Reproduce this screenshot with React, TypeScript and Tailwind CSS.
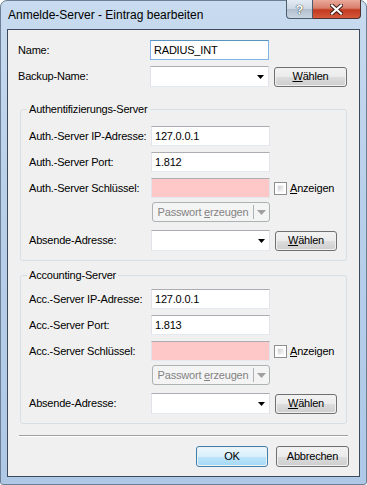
import type { ReactNode } from 'react'

const font = { fontFamily: '"Liberation Sans", Arial, sans-serif' }

function TextBox({ value, focus, pink }: { value?: string; focus?: boolean; pink?: boolean }) {
  const border = focus
    ? 'border-[#7eb4ea] border-t-[#5794bf]'
    : 'border-[#e2e3ea] border-t-[#abadb3] border-b-[#e3e9ef]'
  return (
    <div
      className={`w-[119px] h-[20px] border ${border} ${pink ? 'bg-[#ffc8c8]' : 'bg-white'} flex items-center px-[3px] text-[11px] tracking-[-0.2px] text-black`}
    >
      {value}
    </div>
  )
}

function Combo() {
  return (
    <div className="w-[119px] h-[21px] border border-[#e2e3ea] border-t-[#abadb3] border-b-[#e3e9ef] bg-white flex items-center justify-end pr-[4px]">
      <svg width="7" height="4" viewBox="0 0 7 4">
        <path d="M0 0h7L3.5 4z" fill="#000" />
      </svg>
    </div>
  )
}

function Button({ children, w, h = 'h-[20px]', primary }: { children: ReactNode; w: string; h?: string; primary?: boolean }) {
  return (
    <div className={`${w} ${h} rounded-[3px] border ${primary ? 'border-[#3c7fb1]' : 'border-[#707070]'} p-px`}>
      <div
        className={`h-full rounded-[2px] flex items-center justify-center text-[11px] tracking-[-0.2px] text-black ${
          primary
            ? 'bg-[linear-gradient(#eaf6fd_0%,#d9f0fc_50%,#bee6fd_50%,#a7d9f5_100%)]'
            : 'bg-[linear-gradient(#f2f2f2_0%,#ebebeb_50%,#dddddd_50%,#cfcfcf_100%)]'
        }`}
      >
        {children}
      </div>
    </div>
  )
}

function Waehlen({ w }: { w: string }) {
  return (
    <Button w={w}>
      <span>
        <span className="underline">W</span>ählen
      </span>
    </Button>
  )
}

function SplitDisabled() {
  return (
    <div className="w-[118px] h-[20px] rounded-[3px] border border-[#adb2b5] bg-[#f4f4f4] flex items-center text-[11px] tracking-[-0.2px] text-[#838383]">
      <div className="flex-1 flex justify-center">
        <span>
          Passwort <span className="underline">e</span>rzeugen
        </span>
      </div>
      <div className="w-px h-[14px] bg-[#adb2b5]" />
      <div className="w-[15px] flex justify-center">
        <svg width="9" height="5" viewBox="0 0 9 5">
          <path d="M0 0h9L4.5 5z" fill="#a0a0a0" />
        </svg>
      </div>
    </div>
  )
}

function Check() {
  return (
    <div className="flex items-center ml-[4px]">
      <div className="w-[13px] h-[13px] border border-[#8e8f8f] bg-white p-[2px]">
        <div className="w-full h-full bg-[linear-gradient(135deg,#cbcfd5,#f6f6f6)] border border-[#f4f4f4]" />
      </div>
      <span className="ml-[3px] text-[11px] tracking-[-0.2px]">
        <span className="underline">A</span>nzeigen
      </span>
    </div>
  )
}

function Row({ label, lw, mt, children }: { label?: string; lw: string; mt: string; children: ReactNode }) {
  return (
    <div className={`flex items-center ${mt}`}>
      <div className={`${lw} text-[11px] tracking-[-0.2px] text-black`}>{label}</div>
      {children}
    </div>
  )
}

function Group({
  title,
  prefix,
  ip,
  port,
  mt,
  pt,
}: {
  title: string
  prefix: string
  ip: string
  port: string
  mt: string
  pt: string
}) {
  const lw = 'w-[122px]'
  return (
    <div className={`relative ${mt} ${pt} mx-[12px] border border-[#d5dfe5] rounded-[3px] pl-[8px] pb-[9px]`}>
      <div className="absolute left-[6px] top-[-8px] bg-[#f0f0f0] px-[2px] text-[11px] tracking-[-0.2px] leading-[14px]">
        {title}
      </div>
      <Row label={`${prefix}-Server IP-Adresse:`} lw={lw} mt="mt-0">
        <TextBox value={ip} />
      </Row>
      <Row label={`${prefix}-Server Port:`} lw={lw} mt="mt-[6px]">
        <TextBox value={port} />
      </Row>
      <Row label={`${prefix}-Server Schlüssel:`} lw={lw} mt="mt-[6px]">
        <TextBox pink />
        <Check />
      </Row>
      <Row lw={lw} mt="mt-[4px]">
        <div className="ml-px">
          <SplitDisabled />
        </div>
      </Row>
      <Row label="Absende-Adresse:" lw={lw} mt="mt-[8px]">
        <Combo />
        <div className="ml-[5px]">
          <Waehlen w="w-[62px]" />
        </div>
      </Row>
    </div>
  )
}

export default function App() {
  return (
    <div className="w-[367px] h-[485px] overflow-hidden bg-white" style={font}>
      <div className="relative w-[367px] h-[485px] rounded-t-[7px] rounded-b-[3px] border border-[#6d7f94] bg-[linear-gradient(#c8dbef_0%,#b9d0ea_40%,#aec8e6_100%)] px-[6px] pb-[7px] pt-[28px]">
        <div className="absolute left-[7px] top-[6px] text-[12px] text-black leading-[16px]">
          Anmelde-Server - Eintrag bearbeiten
        </div>
        <div className="absolute right-[5px] top-[-1px] flex">
          <div className="w-[27px] h-[19px] border border-[#4d5d70] border-t-0 rounded-bl-[4px] bg-[linear-gradient(#e4ebf3_0%,#cdd8e4_50%,#b1bfcd_50%,#c9d5e1_100%)] flex items-center justify-center">
            <span className="text-[13px] font-bold text-white leading-none" style={{ textShadow: '0 0 1px #233, 0 0 1px #233' }}>
              ?
            </span>
          </div>
          <div className="w-[48px] h-[19px] border border-[#4d3030] border-t-0 border-l-0 rounded-br-[4px] bg-[linear-gradient(#e9a99b_0%,#d8806c_45%,#c2391f_55%,#d55a3c_100%)] flex items-center justify-center">
            <svg width="13" height="11" viewBox="0 0 13 11">
              <path d="M2 1.5l9 8M11 1.5l-9 8" stroke="#3a1a14" strokeWidth="4" strokeLinecap="square" />
              <path d="M2 1.5l9 8M11 1.5l-9 8" stroke="#fff" strokeWidth="2.2" strokeLinecap="square" />
            </svg>
          </div>
        </div>
        <div className="h-full border border-[#3c4a5c] bg-[#f0f0f0] text-black">
          <div className="pl-[10px]">
            <Row label="Name:" lw="w-[132px]" mt="mt-[10px]">
              <TextBox value="RADIUS_INT" focus />
            </Row>
            <Row label="Backup-Name:" lw="w-[132px]" mt="mt-[6px]">
              <Combo />
              <div className="ml-[5px]">
                <Waehlen w="w-[73px]" />
              </div>
            </Row>
          </div>
          <Group title="Authentifizierungs-Server" prefix="Auth." ip="127.0.0.1" port="1.812" mt="mt-[22px]" pt="pt-[16px]" />
          <Group title="Accounting-Server" prefix="Acc." ip="127.0.0.1" port="1.813" mt="mt-[14px]" pt="pt-[13px]" />
          <div className="mx-[11px] mt-[11px] h-px bg-[#a0a0a0] border-b border-white box-content" />
          <div className="flex justify-end gap-[8px] mr-[10px] mt-[9px]">
            <Button w="w-[72px]" h="h-[21px]" primary>
              OK
            </Button>
            <Button w="w-[73px]" h="h-[21px]">
              Abbrechen
            </Button>
          </div>
        </div>
      </div>
    </div>
  )
}
